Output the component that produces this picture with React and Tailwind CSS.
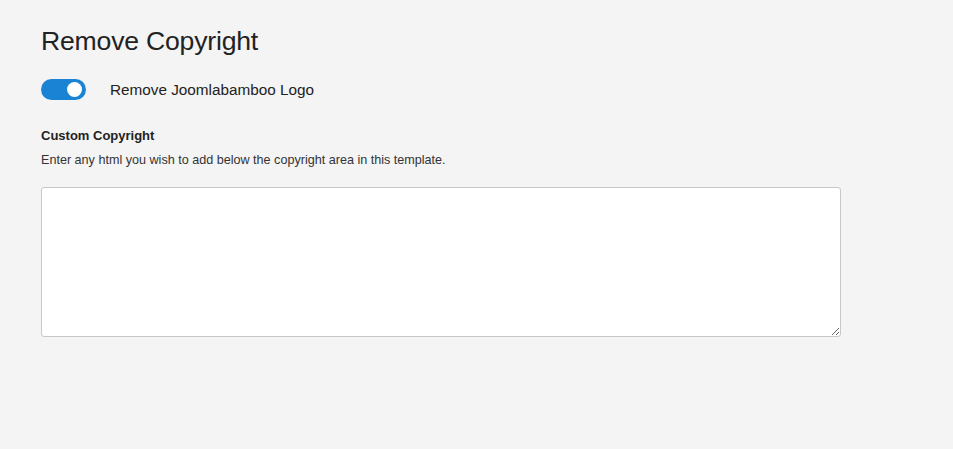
import React from 'react'
import { useState } from 'react'

function App() {
    const [removeLogo, setRemoveLogo] = useState(true)
    const [html, setHtml] = useState('')

    return (
        <div className="min-h-screen w-full bg-[#f4f4f4] text-[#222] font-['Liberation_Sans',Arial,sans-serif]">
            <div className="pl-[41px] pt-[26px]">
                <h1 className="text-[26.6px] leading-[30px] font-normal tracking-[-0.2px]">Remove Copyright</h1>

                <div className="flex items-center mt-[23px] h-[21px]">
                    <button
                        onClick={() => setRemoveLogo(!removeLogo)}
                        className={`relative w-[45px] h-[21px] rounded-full ${removeLogo ? 'bg-[#1b83d4]' : 'bg-[#ccc]'}`}
                    >
                        <span
                            className={`absolute top-[3px] w-[15px] h-[15px] rounded-full bg-white ${removeLogo ? 'left-[26px]' : 'left-[4px]'}`}
                        />
                    </button>
                    <span className="ml-[24px] text-[15.3px] leading-[20px]">Remove Joomlabamboo Logo</span>
                </div>

                <div className="mt-[28px] text-[13px] leading-[16px] font-bold">Custom Copyright</div>
                <p className="mt-[8px] text-[12.6px] leading-[16px] text-[#333]">Enter any html you wish to add below the copyright area in this template.</p>

                <textarea
                    value={html}
                    onChange={(e) => setHtml(e.target.value)}
                    className="block mt-[19px] w-[800px] h-[150px] bg-white border border-[#c8c8c8] rounded-[3px] outline-none p-2 text-[13px]"
                />
            </div>
        </div>
    )
}

export default App
